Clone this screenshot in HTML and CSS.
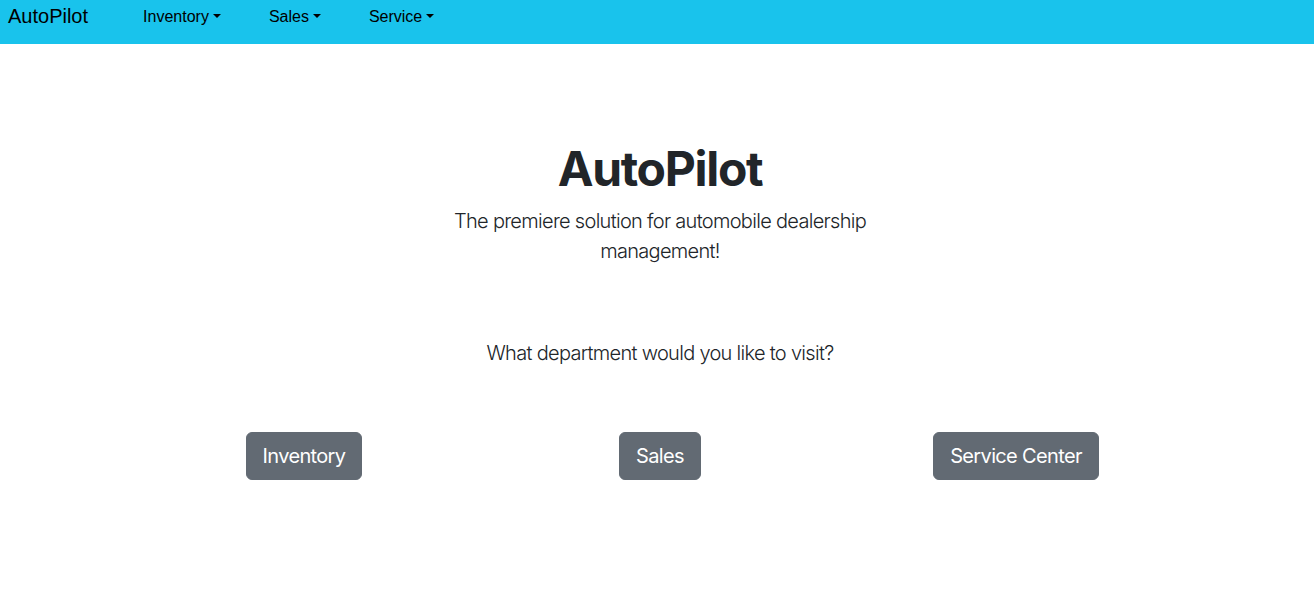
FILE: index.html
```html
<!DOCTYPE html>
<html lang="en">
<head>
<meta charset="utf-8">
<title>AutoPilot</title>
<link rel="stylesheet" href="styles.css">
</head>
<body>
<nav class="navbar">
  <a class="brand" href="#">AutoPilot</a>
  <ul class="nav">
    <li><a class="nav-link toggle" href="#">Inventory</a></li>
    <li><a class="nav-link toggle" href="#">Sales</a></li>
    <li><a class="nav-link toggle" href="#">Service</a></li>
  </ul>
</nav>
<main class="main">
  <section class="hero">
    <h1 class="title">AutoPilot</h1>
    <p class="lead">The premiere solution for automobile dealership management!</p>
  </section>
  <p class="question">What department would you like to visit?</p>
  <div class="departments">
    <div class="dept"><a class="btn" href="#">Inventory</a></div>
    <div class="dept"><a class="btn" href="#">Sales</a></div>
    <div class="dept"><a class="btn" href="#">Service Center</a></div>
  </div>
</main>
</body>
</html>
```
FILE: styles.css
```css
* { box-sizing: border-box; }
html, body { margin: 0; padding: 0; }
body {
  font-family: Inter, "Noto Sans", sans-serif;
  color: #212529;
  background: #fff;
}
a { text-decoration: none; }

.navbar {
  height: 44px;
  background: #19c3ec;
  display: flex;
  align-items: flex-start;
  padding-left: 8px;
  font-family: "Liberation Sans", Arial, sans-serif;
}
.brand {
  font-size: 20px;
  line-height: 33px;
  color: #000;
  margin-right: 55px;
}
.nav {
  list-style: none;
  margin: 0;
  padding: 0;
  display: flex;
  gap: 48px;
}
.nav-link {
  display: block;
  font-size: 16px;
  line-height: 33px;
  color: #000;
}
.toggle::after {
  content: "";
  display: inline-block;
  margin-left: 4px;
  vertical-align: 4px;
  border-top: 4.8px solid #000;
  border-left: 4px solid transparent;
  border-right: 4px solid transparent;
}

.main {
  padding-left: 6px;
  text-align: center;
}
.hero {
  padding-top: 96px;
}
.title {
  margin: 0 0 8px;
  font-size: 48px;
  line-height: 1.2;
  font-weight: 700;
  letter-spacing: -1.3px;
}
.lead {
  margin: 0 auto;
  max-width: 440px;
  font-size: 20px;
  line-height: 30px;
  font-weight: 300;
  letter-spacing: -0.7px;
}
.question {
  margin: 72px 0 0;
  font-size: 20px;
  line-height: 30px;
  font-weight: 300;
  letter-spacing: -0.7px;
}
.departments {
  margin: 64px auto 0;
  display: grid;
  grid-template-columns: repeat(3, 356px);
  justify-content: center;
}
.dept {
  display: flex;
  justify-content: center;
}
.btn {
  display: inline-block;
  padding: 8px 16px;
  font-size: 20px;
  line-height: 30px;
  letter-spacing: -0.65px;
  color: #fff;
  background: #626a73;
  border: 1px solid #626a73;
  border-radius: 6px;
}
```
